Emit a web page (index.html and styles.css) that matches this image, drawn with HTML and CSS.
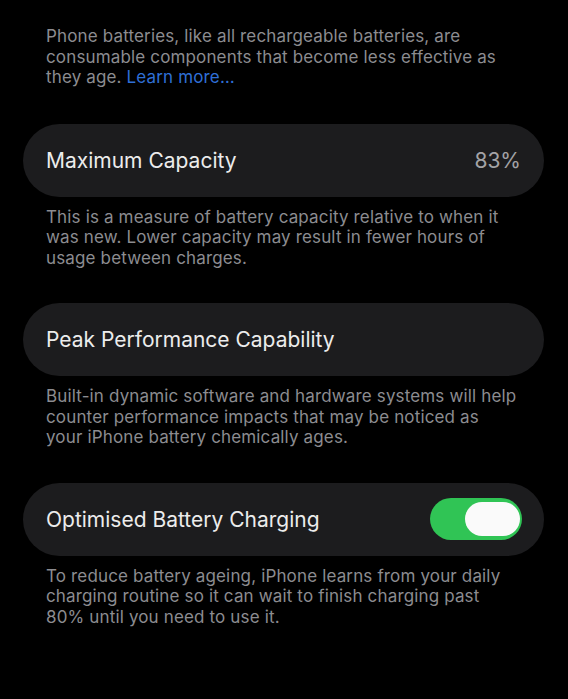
FILE: index.html
```html
<!DOCTYPE html>
<html>
<head>
<meta charset="utf-8">
<link rel="stylesheet" href="styles.css">
</head>
<body>
<div class="page">
  <p class="note first">Phone batteries, like all rechargeable batteries, are consumable components that become less effective as they age. <span class="link">Learn more…</span></p>

  <div class="card">
    <span class="title">Maximum Capacity</span>
    <span class="value">83%</span>
  </div>
  <p class="note">This is a measure of battery capacity relative to when it was new. Lower capacity may result in fewer hours of usage between charges.</p>

  <div class="card">
    <span class="title">Peak Performance Capability</span>
  </div>
  <p class="note">Built-in dynamic software and hardware systems will help counter performance impacts that may be noticed as your iPhone battery chemically ages.</p>

  <div class="card">
    <span class="title">Optimised Battery Charging</span>
    <span class="toggle"><span class="knob"></span></span>
  </div>
  <p class="note">To reduce battery ageing, iPhone learns from your daily charging routine so it can wait to finish charging past 80% until you need to use it.</p>
</div>
</body>
</html>
```

FILE: styles.css
```css
html, body {
  margin: 0;
  padding: 0;
  background: #000;
}
body {
  font-family: Inter, "Noto Sans", sans-serif;
  -webkit-font-smoothing: antialiased;
}
.page {
  width: 521px;
  padding: 0 0 0 23px;
}
.note {
  margin: 0;
  padding: 10px 0 0 23px;
  width: 472px;
  font-size: 17px;
  line-height: 20.5px;
  color: #8c8c90;
  letter-spacing: 0.15px;
}
.note.first {
  padding-top: 26px;
  margin-bottom: 36px;
}
.note + .card { margin-top: 35px; }
.note.first + .card { margin-top: 0; }
.link {
  color: #2f6fd6;
}
.card {
  height: 73px;
  border-radius: 37px;
  background: #1c1c1e;
  display: flex;
  align-items: center;
  justify-content: space-between;
  padding: 0 23px;
}
.title {
  font-size: 21px;
  color: #ececec;
}
.value {
  font-size: 21px;
  color: #a3a3a6;
}
.toggle {
  width: 92px;
  height: 42px;
  border-radius: 21px;
  background: #30c455;
  display: flex;
  align-items: center;
  justify-content: flex-end;
  padding-right: 2px;
  box-sizing: border-box;
  margin-right: -1px;
}
.knob {
  width: 55px;
  height: 34px;
  border-radius: 17px;
  background: #fafafa;
}
```
